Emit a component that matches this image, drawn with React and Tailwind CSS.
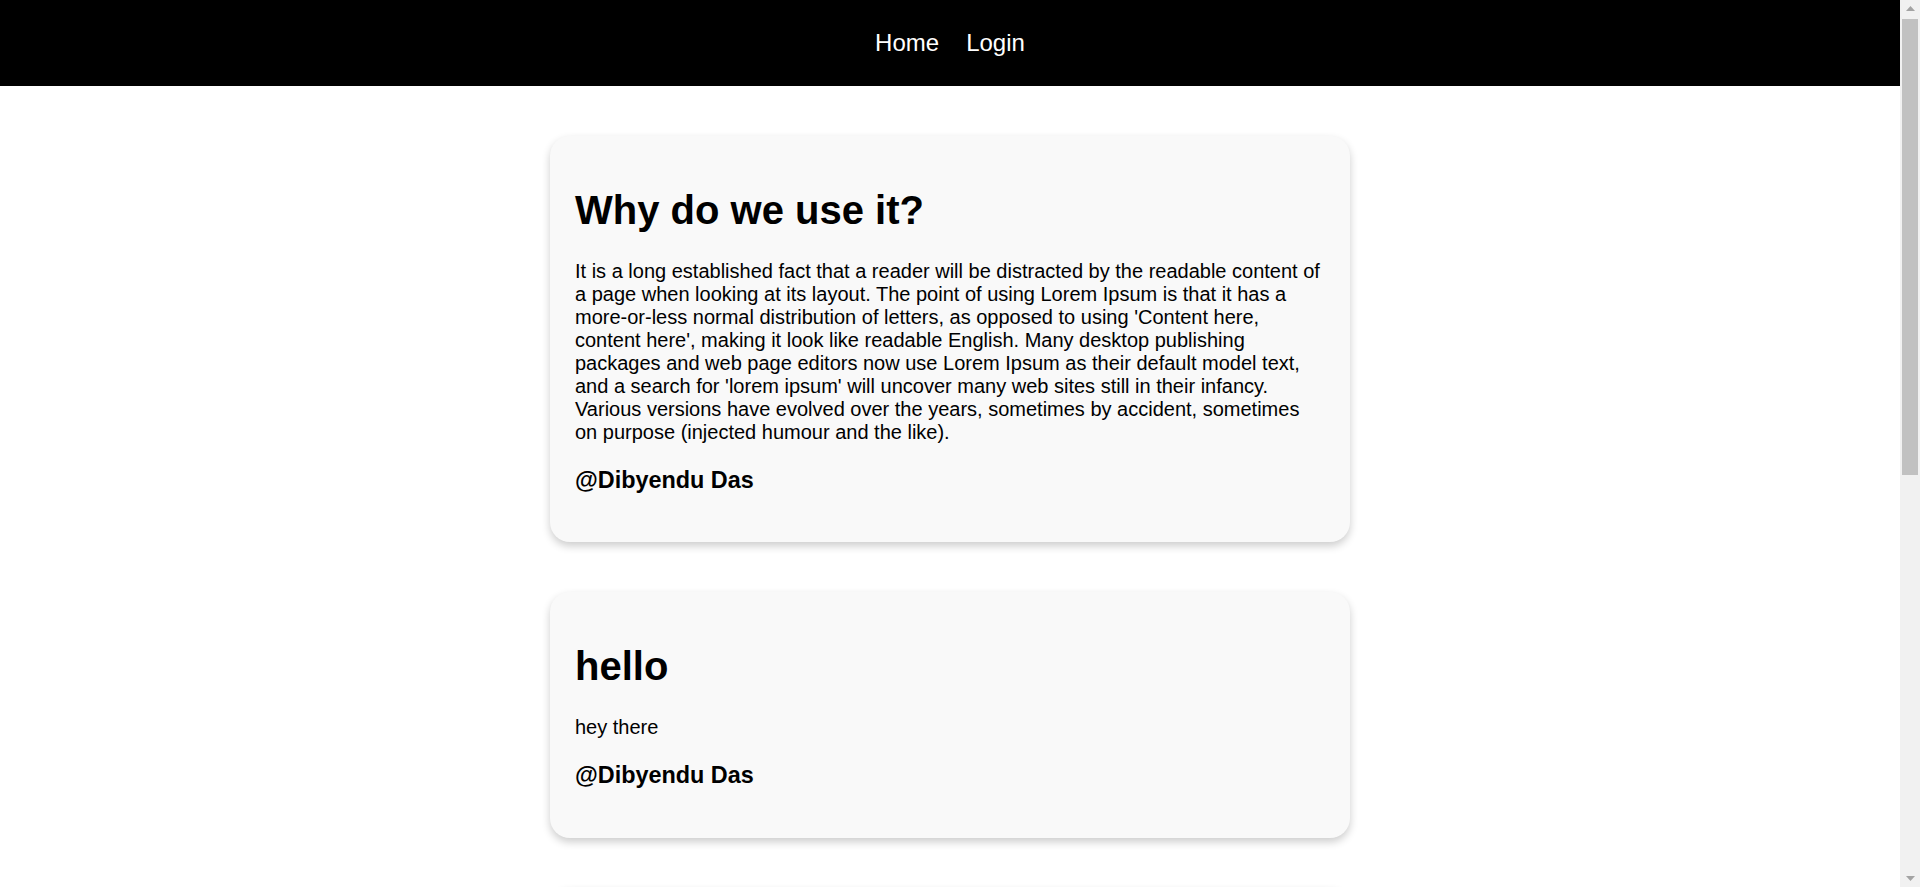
import React from "react";

const posts = [
  {
    id: 1,
    title: "Why do we use it?",
    body:
      "It is a long established fact that a reader will be distracted by the readable content of a page when looking at its layout. The point of using Lorem Ipsum is that it has a more-or-less normal distribution of letters, as opposed to using 'Content here, content here', making it look like readable English. Many desktop publishing packages and web page editors now use Lorem Ipsum as their default model text, and a search for 'lorem ipsum' will uncover many web sites still in their infancy. Various versions have evolved over the years, sometimes by accident, sometimes on purpose (injected humour and the like).",
    author: "Dibyendu Das",
  },
  {
    id: 2,
    title: "hello",
    body: "hey there",
    author: "Dibyendu Das",
  },
  {
    id: 3,
    title: "Where does it come from?",
    body:
      "Contrary to popular belief, Lorem Ipsum is not simply random text. It has roots in a piece of classical Latin literature from 45 BC, making it over 2000 years old. Richard McClintock, a Latin professor at Hampden-Sydney College in Virginia, looked up one of the more obscure Latin words, consectetur, from a Lorem Ipsum passage, and going through the cites of the word in classical literature, discovered the undoubtable source. Lorem Ipsum comes from sections 1.10.32 and 1.10.33 of \"de Finibus Bonorum et Malorum\" (The Extremes of Good and Evil) by Cicero, written in 45 BC. This book is a treatise on the theory of ethics.",
    author: "Dibyendu Das",
  },
  {
    id: 4,
    title: "test post",
    body: "just checking",
    author: "Dibyendu Das",
  },
];

const PostCard = ({ post }) => (
  <div className="w-[800px] mt-[50px] px-[25px] py-[25px] bg-[#f9f9f9] rounded-[20px] shadow-[0_4px_8px_rgba(0,0,0,0.2)] text-[20px] leading-[1.15] text-black">
    <h1 className="text-[40px] font-bold leading-[1.15] mt-[25.8px] mb-[26.8px]">{post.title}</h1>
    <p className="my-[20px]">{post.body}</p>
    <h3 className="text-[23.4px] font-bold leading-[1.15] my-[23.4px]">@{post.author}</h3>
  </div>
);

// page scrollbar as it shows in the screenshot
const ScrollStrip = () => (
  <div className="sticky top-0 h-screen w-[20px] shrink-0 bg-[#f1f1f1] flex flex-col items-center">
    <div className="h-[17px] w-full flex items-center justify-center">
      <svg width="9" height="5" viewBox="0 0 9 5">
        <path d="M4.5 0 L9 5 L0 5 Z" fill="#a3a3a3" />
      </svg>
    </div>
    <div className="mt-[2px] h-[456px] w-[16px] bg-[#c1c1c1]" />
    <div className="flex-1" />
    <div className="h-[17px] w-full flex items-center justify-center">
      <svg width="9" height="5" viewBox="0 0 9 5">
        <path d="M0 0 L9 0 L4.5 5 Z" fill="#a3a3a3" />
      </svg>
    </div>
  </div>
);

const App = () => {
  return (
    <div className="flex bg-white font-['Liberation_Sans',Arial,sans-serif]">
      <div className="flex-1 min-w-0">
        <nav className="h-[86px] bg-black flex items-center justify-center gap-[27px]">
          <a href="#" className="text-white text-[24px] leading-none">Home</a>
          <a href="#" className="text-white text-[24px] leading-none">Login</a>
        </nav>

        <div className="flex flex-col items-center pb-[50px]">
          {posts.map((post) => (
            <PostCard key={post.id} post={post} />
          ))}
        </div>
      </div>
      <ScrollStrip />
    </div>
  );
};

export default App;
